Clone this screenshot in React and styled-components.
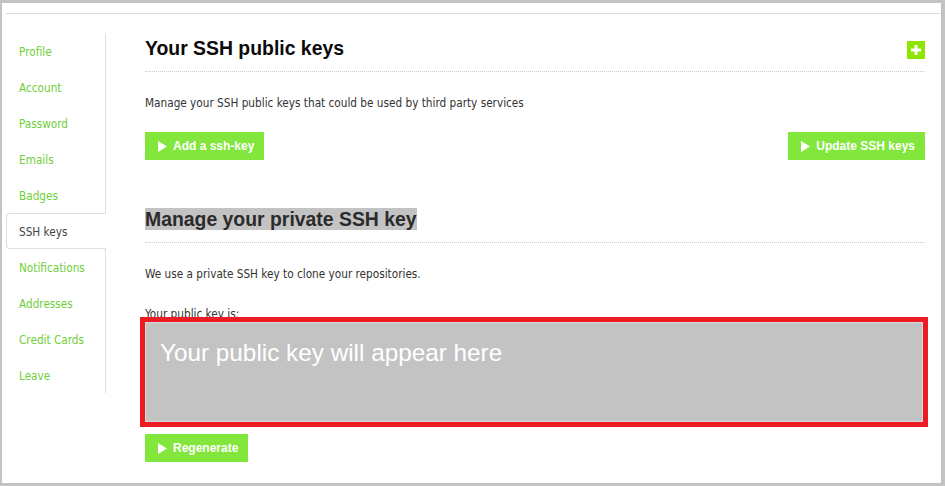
import React from 'react'
import styled, { createGlobalStyle } from 'styled-components'

const GlobalStyle = createGlobalStyle`
    html, body {
        margin: 0;
        padding: 0;
        background: #ffffff;
    }
    body {
        font-family: "DejaVu Sans Condensed", "Liberation Sans", Arial, sans-serif;
        font-size: 11.7px;
    }
`

const menuItems = [
    'Profile',
    'Account',
    'Password',
    'Emails',
    'Badges',
    'SSH keys',
    'Notifications',
    'Addresses',
    'Credit Cards',
    'Leave',
]

function PlayIcon() {
    return (
        <svg width="9" height="11" viewBox="0 0 9 11">
            <path d="M0 0 L9 5.5 L0 11 Z" fill="#ffffff" />
        </svg>
    )
}

export default function App() {
    return (
        <Frame>
            <GlobalStyle />
            <TopRule />
            <Main>
                <Sidebar>
                    {menuItems.map((item) => (
                        <MenuItem key={item} active={item === 'SSH keys'}>
                            {item}
                        </MenuItem>
                    ))}
                </Sidebar>

                <Content>
                    <SectionHeader>
                        <Title>Your SSH public keys</Title>
                        <PlusButton aria-label="add">
                            <svg width="10" height="10" viewBox="0 0 10 10">
                                <path d="M3.5 0 H6.5 V3.5 H10 V6.5 H6.5 V10 H3.5 V6.5 H0 V3.5 H3.5 Z" fill="#ffffff" />
                            </svg>
                        </PlusButton>
                    </SectionHeader>

                    <Text>Manage your SSH public keys that could be used by third party services</Text>

                    <ButtonRow>
                        <GreenButton><PlayIcon />Add a ssh-key</GreenButton>
                        <GreenButton><PlayIcon />Update SSH keys</GreenButton>
                    </ButtonRow>

                    <SectionHeader second>
                        <Title><Highlight>Manage your private SSH key</Highlight></Title>
                    </SectionHeader>

                    <Text>We use a private SSH key to clone your repositories.</Text>

                    <Label>Your public key is:</Label>
                    <KeyBox>
                        <Placeholder>Your public key will appear here</Placeholder>
                    </KeyBox>

                    <GreenButton><PlayIcon />Regenerate</GreenButton>
                </Content>
            </Main>
        </Frame>
    )
}

const Frame = styled.div`
    box-sizing: border-box;
    width: 945px;
    height: 486px;
    border-style: solid;
    border-color: #c3c3c3;
    border-width: 3px 4px 3px 2px;
    padding: 10px 0 0 4px;
    background: #ffffff;
    overflow: hidden;
`

const TopRule = styled.div`
    height: 1px;
    background: #dcdcdc;
`

const Main = styled.div`
    display: flex;
    align-items: flex-start;
    padding: 19px 16px 0 0;
`

const Sidebar = styled.nav`
    display: flex;
    flex-direction: column;
    width: 99px;
    flex-shrink: 0;
    border-right: 1px solid #dedede;
`

const MenuItem = styled.div`
    box-sizing: border-box;
    height: 36px;
    line-height: 34px;
    padding: 1px 0 0 12px;
    color: ${(p) => (p.active ? '#444444' : '#6fd03a')};
    border: 1px solid ${(p) => (p.active ? '#dedede' : 'transparent')};
    border-right: none;
    border-radius: 4px 0 0 4px;
    margin-right: ${(p) => (p.active ? '-1px' : '0')};
    background: #ffffff;
    position: relative;
    z-index: ${(p) => (p.active ? 1 : 0)};
`

const Content = styled.div`
    flex: 1;
    margin-left: 39px;
    padding-top: 3px;
    display: flex;
    flex-direction: column;
    align-items: flex-start;
`

const SectionHeader = styled.div`
    align-self: stretch;
    display: flex;
    justify-content: space-between;
    align-items: center;
    padding-bottom: 11px;
    border-bottom: 1px dotted #cccccc;
    margin-top: ${(p) => (p.second ? '47px' : '0')};
`

const Title = styled.h2`
    margin: 0;
    font-family: "Liberation Sans", Arial, sans-serif;
    font-size: 19.4px;
    line-height: 24px;
    font-weight: bold;
    color: #0a0a0a;
`

const Highlight = styled.span`
    background: #c3c3c3;
    color: #2b2b2b;
`

const PlusButton = styled.div`
    width: 18px;
    height: 18px;
    background: #8ee600;
    display: flex;
    align-items: center;
    justify-content: center;
    margin-top: 4px;
`

const Text = styled.p`
    margin: 23px 0 0;
    line-height: 16px;
    color: #333333;
`

const Label = styled.p`
    margin: 24px 0 0;
    line-height: 16px;
    color: #333333;
`

const ButtonRow = styled.div`
    align-self: stretch;
    display: flex;
    justify-content: space-between;
    margin-top: 21px;
`

const GreenButton = styled.button`
    display: flex;
    align-items: center;
    gap: 6px;
    height: 28px;
    padding: 0 10px 0 13px;
    border: none;
    border-radius: 0;
    background: #82e63c;
    color: #ffffff;
    font-family: "Liberation Sans", Arial, sans-serif;
    font-size: 12px;
    font-weight: bold;
    cursor: pointer;
`

const KeyBox = styled.div`
    box-sizing: border-box;
    width: 778px;
    height: 100px;
    margin-top: 0;
    margin-bottom: 12px;
    background: #c3c3c3;
    border: 1px solid #dadada;
    outline: 5px solid #ed1c24;
    padding: 16px 14px;
`

const Placeholder = styled.div`
    font-family: "Liberation Sans", Arial, sans-serif;
    font-size: 24.3px;
    line-height: 28px;
    color: #ffffff;
`
